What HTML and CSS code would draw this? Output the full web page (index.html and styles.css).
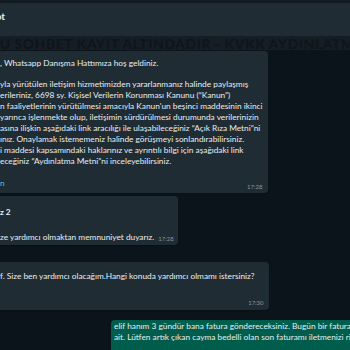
FILE: index.html
```html
<!DOCTYPE html>
<html lang="tr">
<head>
  <meta charset="UTF-8" />
  <meta name="viewport" content="width=device-width, initial-scale=1.0"/>
  <title>Sohbet</title>
  <link rel="stylesheet" href="styles.css">
</head>
<body>
  <div class="app">
    <!-- ===== [üst bar] ===== -->
    <header class="chat-header">
      <span class="chat-title">Chatbot</span>
    </header>

    <div class="notice">BU SOHBET KAYIT ALTINDADIR - KVKK AYDINLATMA METNİ VE AÇIK RIZA</div>

    <!-- ===== [mesajlar] ===== -->
    <main class="messages">
      <div class="row in first">
        <div class="bubble">
          <p class="line">, Whatsapp Danışma Hattımıza hoş geldiniz.</p>
          <p class="line">&nbsp;</p>
          <p class="line">yla yürütülen iletişim hizmetimizden yararlanmanız halinde paylaşmış</p>
          <p class="line">erileriniz, 6698 sy. Kişisel Verilerin Korunması Kanunu (“Kanun”)</p>
          <p class="line">n faaliyetlerinin yürütülmesi amacıyla Kanun'un beşinci maddesinin ikinci</p>
          <p class="line">yarınca işlenmekte olup, iletişimin sürdürülmesi durumunda verilerinizin</p>
          <p class="line">asına ilişkin aşağıdaki link aracılığı ile ulaşabileceğiniz “Açık Rıza Metni”ni</p>
          <p class="line">ınız. Onaylamak istememeniz halinde görüşmeyi sonlandırabilirsiniz.</p>
          <p class="line">i maddesi kapsamındaki haklarınız ve ayrıntılı bilgi için aşağıdaki link</p>
          <p class="line">eceğiniz “Aydınlatma Metni”ni inceleyebilirsiniz.</p>
          <p class="line">&nbsp;</p>
          <p class="line link">n</p>
          <div class="meta">17:28</div>
        </div>
      </div>

      <div class="row in">
        <div class="bubble second">
          <p class="line strong">z 2</p>
          <div class="inline">
            <p class="line">ze yardımcı olmaktan memnuniyet duyarız.</p>
            <span class="meta">17:28</span>
          </div>
        </div>
      </div>

      <div class="row in gap">
        <div class="bubble third">
          <p class="line">f. Size ben yardımcı olacağım.Hangi konuda yardımcı olmamı istersiniz?</p>
          <div class="meta tall">17:30</div>
        </div>
      </div>

      <div class="row out">
        <div class="bubble">
          <p class="line">elif hanım 3 gündür bana fatura göndereceksiniz. Bugün bir fatura geldi bana</p>
          <p class="line">ait. Lütfen artık çıkan cayma bedelli olan son faturamı iletmenizi rica ediyorum.</p>
        </div>
      </div>
    </main>
  </div>
</body>
</html>
```

FILE: styles.css
```css
/* ===== [genel] ===== */
body {
  margin: 0;
  background: #0b141a;
  font-family: Lato, "Open Sans", sans-serif;
  color: #e9edef;
  overflow: hidden;
}

.app {
  width: 350px;
  height: 350px;
  overflow: hidden;
  display: flex;
  flex-direction: column;
}

/* üst bar */
.chat-header {
  height: 33px;
  border-top: 3px solid #111b21;
  background: #202c33;
  display: flex;
  align-items: flex-start;
  flex-shrink: 0;
}

.chat-title {
  margin-top: 7px;
  margin-left: -31px;
  font-size: 10px;
  font-weight: 700;
  color: #e9edef;
}

/* bulanık bilgi şeridi */
.notice {
  height: 14px;
  flex-shrink: 0;
  background: #151e24;
  color: #0e161b;
  font-size: 14px;
  font-weight: 900;
  line-height: 15px;
  white-space: nowrap;
  overflow: hidden;
  letter-spacing: 0.5px;
  margin-left: -10px;
}

/* ===== [mesajlar] ===== */
.messages {
  display: flex;
  flex-direction: column;
  padding-top: 1px;
}

.row {
  display: flex;
  margin-top: 3px;
}

.row.first {
  margin-top: 0;
}

.row.gap {
  margin-top: 16.5px;
}

.row.out {
  margin-top: 10px;
  padding-left: 111px;
}

.bubble {
  background: #202c33;
  border-radius: 4px;
  padding: 6.5px 5px 2px 8px;
  margin-left: -8px;
  font-size: 8.3px;
  line-height: 10.95px;
  white-space: nowrap;
  box-shadow: 0 1px 1px rgba(0, 0, 0, 0.15);
}

.bubble.second {
  padding-top: 11.5px;
  padding-right: 4px;
}

.bubble.third {
  padding-top: 9.5px;
  padding-bottom: 3px;
  padding-right: 14px;
}

.bubble.third .meta {
  margin-right: -9px;
}

.row.out .bubble {
  background: #005c4b;
  margin-left: 0;
  padding: 1px 0 10px 3px;
  line-height: 11.5px;
}

.line {
  margin: 0;
}

.line.strong {
  font-weight: 700;
}

.line.link {
  color: #53bdeb;
}

.inline {
  display: flex;
  align-items: flex-end;
  margin-top: 14px;
}

.meta {
  font-size: 6px;
  line-height: 8px;
  color: #8696a0;
  text-align: right;
  margin-top: -6px;
}

.inline .meta {
  margin-left: 4px;
  margin-top: 0;
}

.meta.tall {
  margin-top: 16.5px;
}
```
